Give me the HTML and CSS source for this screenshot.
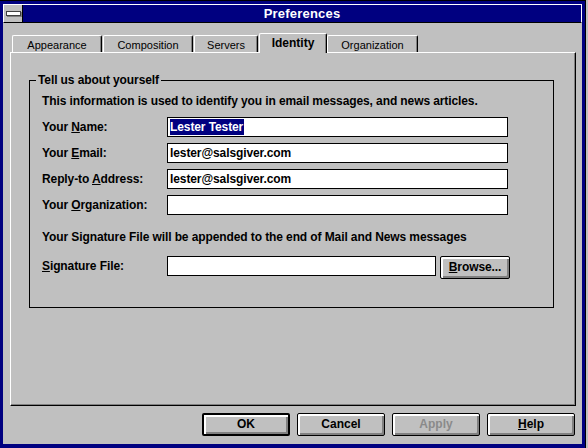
FILE: index.html
```html
<!DOCTYPE html>
<html>
<head>
<meta charset="utf-8">
<link rel="stylesheet" href="styles.css">
</head>
<body>
<div class="window">
  <div class="titlebar">
    <div class="sysmenu"><span class="sysbar"></span></div>
    <div class="title">Preferences</div>
  </div>
  <div class="body">
    <div class="tabs">
      <div class="tab t-app">Appearance</div>
      <div class="tab t-comp">Composition</div>
      <div class="tab t-serv">Servers</div>
      <div class="tab t-id active">Identity</div>
      <div class="tab t-org">Organization</div>
    </div>
    <div class="panel">
      <div class="group">
        <span class="legend">Tell us about yourself</span>
        <p class="intro">This information is used to identify you in email messages, and news articles.</p>
        <div class="grid">
          <div class="label">Your <u>N</u>ame:</div>
          <div class="field"><span class="sel">Lester Tester</span></div>
          <div class="label">Your <u>E</u>mail:</div>
          <div class="field">lester@salsgiver.com</div>
          <div class="label">Reply-to <u>A</u>ddress:</div>
          <div class="field">lester@salsgiver.com</div>
          <div class="label">Your <u>O</u>rganization:</div>
          <div class="field"></div>
        </div>
        <p class="note">Your Signature File will be appended to the end of Mail and News messages</p>
        <div class="sigrow">
          <div class="label"><u>S</u>ignature File:</div>
          <div class="field sigfield"></div>
          <div class="btn browse"><u>B</u>rowse...</div>
        </div>
      </div>
    </div>
    <div class="footer">
      <div class="btn big default">OK</div>
      <div class="btn big">Cancel</div>
      <div class="btn big disabled">Apply</div>
      <div class="btn big"><u>H</u>elp</div>
    </div>
  </div>
</div>
</body>
</html>
```
FILE: styles.css
```css
html, body {
  margin: 0;
  padding: 0;
}
body {
  width: 588px;
  height: 448px;
  overflow: hidden;
  background: #c0c0c0;
  font-family: "Liberation Sans", Arial, sans-serif;
  font-size: 11px;
  color: #000;
}
.window {
  width: 586px;
  height: 448px;
  box-sizing: border-box;
  background: #000080;
  border-top: 1px solid #000;
  border-right: 1px solid #000;
  padding: 3px 3px 4px 3px;
  display: flex;
  flex-direction: column;
}
.titlebar {
  height: 19px;
  box-sizing: border-box;
  border-top: 1px solid #fff;
  border-left: 1px solid #fff;
  border-right: 1px solid #fff;
  border-bottom: 1px solid #000;
  display: flex;
}
.sysmenu {
  width: 18px;
  background: #c0c0c0;
  border-right: 1px solid #000;
  display: flex;
  align-items: center;
  justify-content: center;
}
.sysbar {
  width: 13px;
  height: 3px;
  background: #fff;
  border: 1px solid #404040;
  box-shadow: 1px 1px 0 #808080;
}
.title {
  flex: 1;
  color: #fff;
  font-weight: bold;
  font-size: 13px;
  line-height: 17px;
  text-align: center;
  letter-spacing: 0.2px;
}
.body {
  flex: 1;
  background: #c0c0c0;
  padding: 10px 6px 0 7px;
  display: flex;
  flex-direction: column;
}
.tabs {
  height: 19px;
  display: flex;
  align-items: flex-end;
  padding-left: 2px;
}
.tab {
  height: 17px;
  box-sizing: border-box;
  margin-right: 1px;
  border-top: 1px solid #fff;
  border-left: 1px solid #fff;
  border-right: 1px solid #000;
  border-radius: 2px 2px 0 0;
  box-shadow: inset -1px 0 0 #808080;
  text-align: center;
  line-height: 16px;
  padding-top: 1px;
}
.t-app { width: 90px; }
.t-comp { width: 90px; }
.t-serv { width: 64px; }
.t-id { width: 68px; margin-right: 0; }
.t-org { width: 91px; }
.tab.active {
  height: 20px;
  margin-bottom: -1px;
  background: #c0c0c0;
  position: relative;
  z-index: 1;
  font-weight: bold;
  font-size: 12px;
  padding-top: 1px;
}
.panel {
  height: 354px;
  box-sizing: border-box;
  border-top: 1px solid #fff;
  border-left: 1px solid #fff;
  border-right: 1px solid #000;
  border-bottom: 1px solid #000;
  box-shadow: inset -1px -1px 0 #808080;
  padding: 27px 0 0 18px;
}
.group {
  position: relative;
  width: 525px;
  height: 228px;
  box-sizing: border-box;
  border: 1px solid #000;
  padding: 14px 0 0 12px;
  font-weight: bold;
  font-size: 12px;
  letter-spacing: -0.1px;
}
.legend {
  position: absolute;
  top: -7px;
  left: 6px;
  padding: 0 2px;
  background: #c0c0c0;
  line-height: 13px;
}
.intro, .note {
  margin: 0;
  line-height: 13px;
  white-space: nowrap;
}
.intro { margin-bottom: 9px; }
.grid {
  display: grid;
  grid-template-columns: 125px 341px;
  grid-auto-rows: 20px;
  row-gap: 6px;
  align-items: center;
}
.field {
  height: 20px;
  box-sizing: border-box;
  border: 1px solid #000;
  background: #fff;
  padding-left: 2px;
  line-height: 18px;
  white-space: nowrap;
}
.sel {
  display: inline-block;
  background: #000080;
  color: #fff;
  line-height: 16px;
  padding: 0 1px 0 0;
  vertical-align: top;
  margin-top: 1px;
}
.note { margin-top: 16px; }
.sigrow {
  margin-top: 12px;
  display: flex;
  align-items: flex-start;
}
.sigrow .label {
  width: 125px;
  line-height: 20px;
}
.sigfield { width: 269px; }
.btn {
  box-sizing: border-box;
  border: 1px solid #000;
  border-radius: 2px;
  background: #c0c0c0;
  box-shadow: inset 1px 1px 0 #fff, inset 2px 2px 0 #fff, inset -1px -1px 0 #808080, inset -2px -2px 0 #808080;
  text-align: center;
  font-weight: bold;
  font-size: 12px;
}
.browse {
  width: 70px;
  height: 23px;
  margin-left: 4px;
  line-height: 21px;
}
.footer {
  margin-top: 7px;
  margin-right: 1px;
  display: flex;
  justify-content: flex-end;
  gap: 7px;
}
.big {
  width: 88px;
  height: 23px;
  line-height: 21px;
}
.default {
  border-width: 2px;
  line-height: 19px;
}
.disabled {
  color: #8a8a8a;
}
```
